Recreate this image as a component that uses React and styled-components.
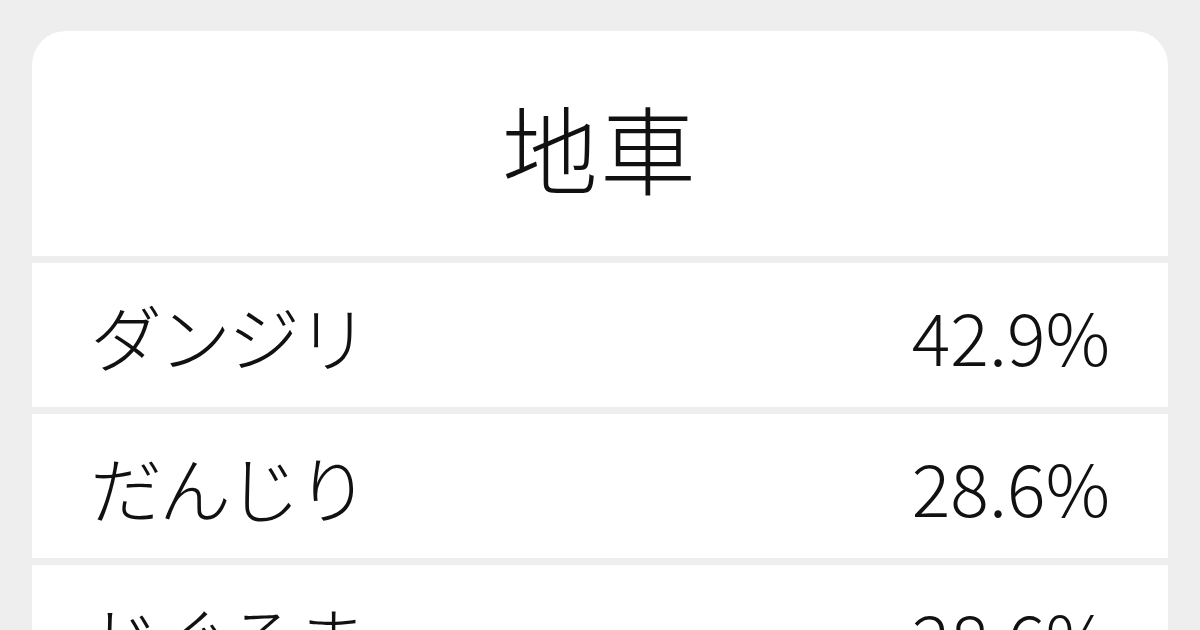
import styled, { createGlobalStyle } from "styled-components";

const GlobalStyle = createGlobalStyle`
    html, body {
        margin: 0;
        padding: 0;
        background: #eeeeee;
        overflow: hidden;
    }
    body {
        font-family: "Noto Sans CJK JP", "Noto Sans", sans-serif;
        color: #111111;
    }
`;

const Page = styled.div`
    width: 1200px;
    height: 630px;
    overflow: hidden;
    padding: 31px 32px 0 32px;
    box-sizing: border-box;
`;

const Card = styled.div`
    display: flex;
    flex-direction: column;
    gap: 7px;
    border-radius: 34px 34px 0 0;
    overflow: hidden;
`;

const Header = styled.div`
    height: 225px;
    background: #ffffff;
    display: flex;
    align-items: center;
    justify-content: center;
    padding-top: 4px;
    box-sizing: border-box;
`;

const Title = styled.h1`
    margin: 0;
    font-size: 96px;
    font-weight: 300;
    line-height: 1;
    letter-spacing: 2px;
`;

const Row = styled.div`
    height: 144px;
    flex-shrink: 0;
    background: #ffffff;
    display: flex;
    align-items: center;
    justify-content: space-between;
    padding: 0 58px 0 58px;
    font-size: 72px;
    font-weight: 300;
    line-height: 1;
`;

const Reading = styled.span`
    letter-spacing: -3px;
`;

const Ratio = styled.span``;

const results = [
    { reading: "ダンジリ", ratio: "42.9%" },
    { reading: "だんじり", ratio: "28.6%" },
    { reading: "じぐるま", ratio: "28.6%" },
];

export default function App() {
    return (
        <>
            <GlobalStyle />
            <Page>
                <Card>
                    <Header>
                        <Title>地車</Title>
                    </Header>
                    {results.map((r, i) => (
                        <Row key={i}>
                            <Reading>{r.reading}</Reading>
                            <Ratio>{r.ratio}</Ratio>
                        </Row>
                    ))}
                </Card>
            </Page>
        </>
    );
}
